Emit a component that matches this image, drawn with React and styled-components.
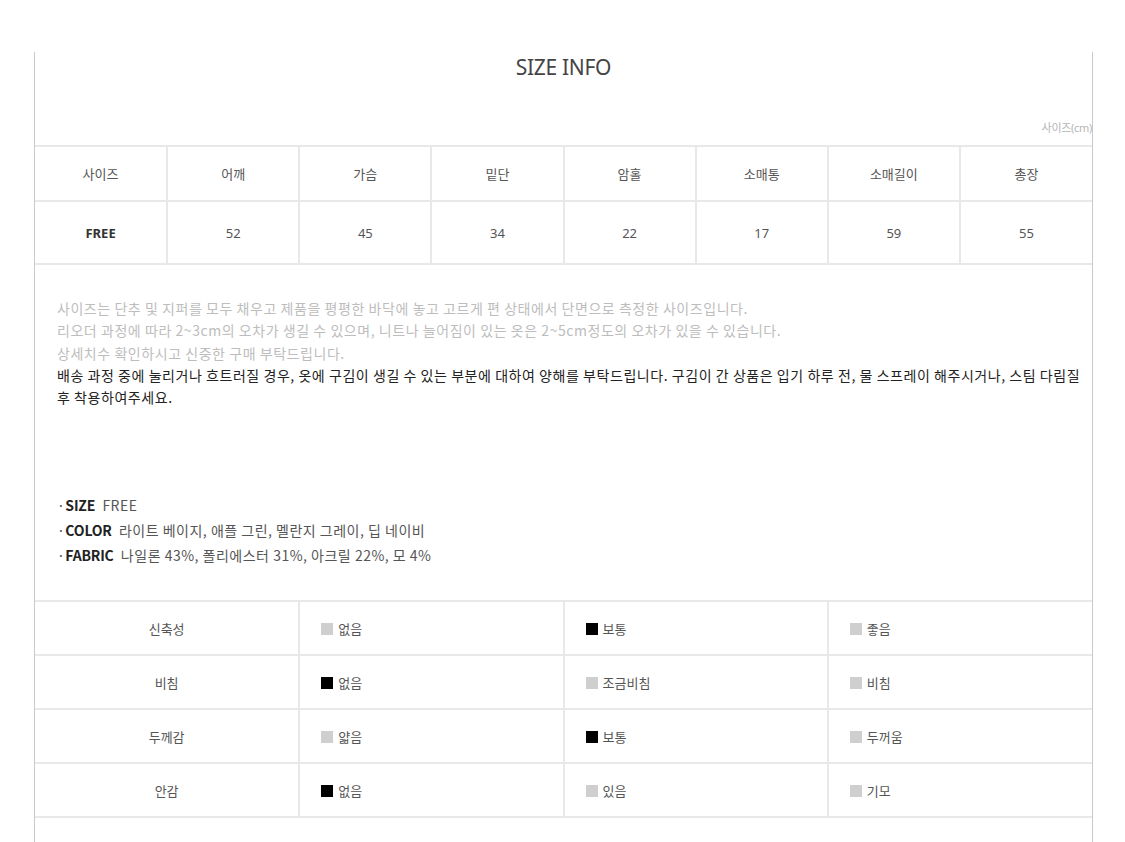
import React from "react";
import styled, { createGlobalStyle } from "styled-components";

const sizeHeads = ["사이즈", "어깨", "가슴", "밑단", "암홀", "소매통", "소매길이", "총장"];
const sizeRow = ["FREE", "52", "45", "34", "22", "17", "59", "55"];

const feelRows = [
  { label: "신축성", opts: [["없음", false], ["보통", true], ["좋음", false]] },
  { label: "비침", opts: [["없음", true], ["조금비침", false], ["비침", false]] },
  { label: "두께감", opts: [["얇음", false], ["보통", true], ["두꺼움", false]] },
  { label: "안감", opts: [["없음", true], ["있음", false], ["기모", false]] },
];

function App() {
  return (
    <>
      <GlobalStyle />
      <Page>
        <Title>SIZE INFO</Title>
        <Unit>사이즈(cm)</Unit>
        <SizeTable>
          <tbody>
            <tr>
              {sizeHeads.map((h) => (
                <HeadCell key={h}>{h}</HeadCell>
              ))}
            </tr>
            <tr>
              {sizeRow.map((v, i) => (
                <ValueCell key={i} $strong={i === 0}>
                  {v}
                </ValueCell>
              ))}
            </tr>
          </tbody>
        </SizeTable>

        <Notes>
          <NoteLine>
            사이즈는 단추 및 지퍼를 모두 채우고 제품을 평평한 바닥에 놓고 고르게 편 상태에서 단면으로 측정한 사이즈입니다.
          </NoteLine>
          <NoteLine>
            리오더 과정에 따라 2~3cm의 오차가 생길 수 있으며, 니트나 늘어짐이 있는 옷은 2~5cm정도의 오차가 있을 수 있습니다.
          </NoteLine>
          <NoteLine>상세치수 확인하시고 신중한 구매 부탁드립니다.</NoteLine>
          <NoteLine $dark>
            배송 과정 중에 눌리거나 흐트러질 경우, 옷에 구김이 생길 수 있는 부분에 대하여 양해를 부탁드립니다. 구김이 간 상품은 입기 하루 전, 물 스프레이 해주시거나, 스팀 다림질 후 착용하여주세요.
          </NoteLine>
        </Notes>

        <Specs>
          <SpecLine>
            ·<SpecLabel>SIZE</SpecLabel>  FREE
          </SpecLine>
          <SpecLine>
            ·<SpecLabel>COLOR</SpecLabel>  라이트 베이지, 애플 그린, 멜란지 그레이, 딥 네이비
          </SpecLine>
          <SpecLine>
            ·<SpecLabel>FABRIC</SpecLabel>  나일론 43%, 폴리에스터 31%, 아크릴 22%, 모 4%
          </SpecLine>
        </Specs>

        <FeelTable>
          <tbody>
            {feelRows.map((r) => (
              <tr key={r.label}>
                <FeelLabel>{r.label}</FeelLabel>
                {r.opts.map(([text, on]) => (
                  <FeelCell key={text}>
                    <Box $on={on} />
                    {text}
                  </FeelCell>
                ))}
              </tr>
            ))}
          </tbody>
        </FeelTable>
      </Page>
    </>
  );
}

export default App;

const GlobalStyle = createGlobalStyle`
  body {
    margin: 0;
    background: #fff;
    font-family: "Noto Sans", "Noto Sans CJK KR", sans-serif;
  }
`;

const Page = styled.div`
  box-sizing: border-box;
  width: 1059px;
  min-height: 790px;
  margin: 52px 0 0 34px;
  border-left: 1px solid #c9c9c9;
  border-right: 1px solid #c9c9c9;
`;

const Title = styled.h1`
  margin: 0;
  text-align: center;
  font-size: 21px;
  font-weight: 400;
  line-height: 30px;
  color: #444;
  letter-spacing: -0.3px;
`;

const Unit = styled.div`
  margin-top: 38px;
  text-align: right;
  font-size: 11px;
  line-height: 16px;
  color: #b5b5b5;
  letter-spacing: -0.3px;
`;

const SizeTable = styled.table`
  width: 100%;
  margin-top: 9px;
  border-collapse: collapse;
  table-layout: fixed;
  td {
    border: 2px solid #e8e8e8;
  }
  tr td:first-child {
    border-left: none;
  }
  tr td:last-child {
    border-right: none;
  }
`;

const HeadCell = styled.td`
  height: 53px;
  padding: 0;
  text-align: center;
  font-size: 13px;
  color: #555;
`;

const ValueCell = styled.td`
  height: 61px;
  padding: 0;
  text-align: center;
  font-size: 13px;
  color: ${(p) => (p.$strong ? "#333" : "#555")};
  font-weight: ${(p) => (p.$strong ? 700 : 400)};
`;

const Notes = styled.div`
  padding: 32px 6px 0 22px;
  font-family: "Noto Sans CJK KR", sans-serif;
  font-size: 14px;
  line-height: 22.3px;
  letter-spacing: 0.55px;
`;

const NoteLine = styled.div`
  color: ${(p) => (p.$dark ? "#222" : "#bdbdbd")};
`;

const Specs = styled.div`
  padding: 85px 22px 0;
  font-family: "Noto Sans CJK KR", sans-serif;
  font-size: 14px;
  line-height: 25px;
  color: #555;
  letter-spacing: 0.5px;
`;

const SpecLine = styled.div`
  white-space: pre;
`;

const SpecLabel = styled.b`
  font-weight: 700;
  color: #222;
  letter-spacing: -0.2px;
`;

const FeelTable = styled.table`
  width: 100%;
  margin-top: 32px;
  border-collapse: collapse;
  table-layout: fixed;
  td {
    border: 2px solid #e8e8e8;
  }
  tr td:first-child {
    border-left: none;
  }
  tr td:last-child {
    border-right: none;
  }
`;

const FeelLabel = styled.td`
  height: 52px;
  padding: 0;
  text-align: center;
  font-family: "Noto Sans CJK KR", sans-serif;
  font-size: 13px;
  color: #555;
`;

const FeelCell = styled.td`
  height: 52px;
  padding: 0 0 0 21px;
  font-family: "Noto Sans CJK KR", sans-serif;
  font-size: 13px;
  color: #555;
  white-space: nowrap;
`;

const Box = styled.span`
  display: inline-block;
  width: 12px;
  height: 12px;
  margin-right: 5px;
  vertical-align: -1px;
  background: ${(p) => (p.$on ? "#000" : "#cfcfcf")};
`;
